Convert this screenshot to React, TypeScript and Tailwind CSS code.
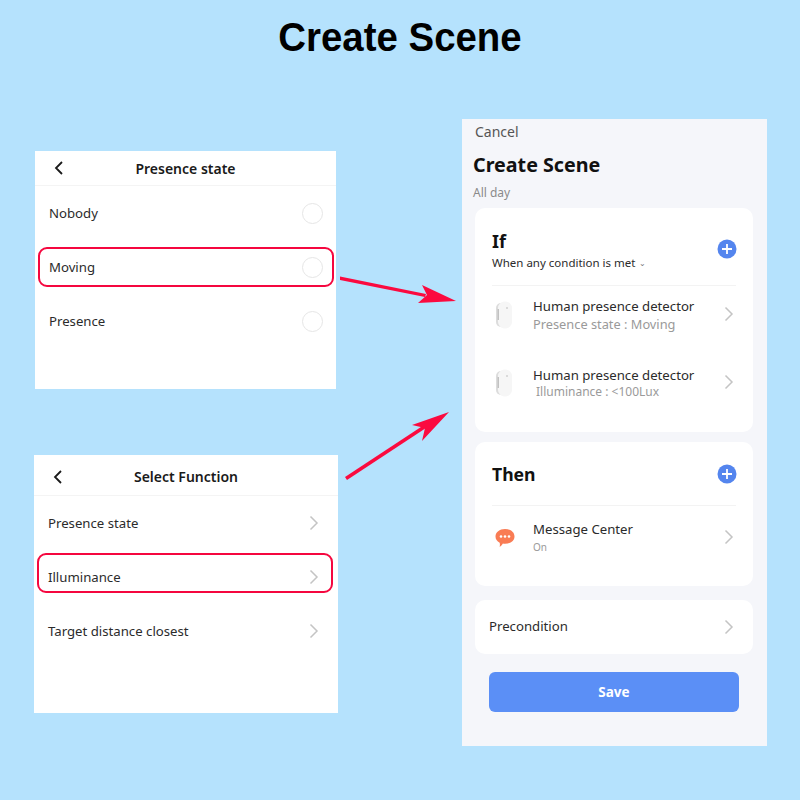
import React from 'react';

const APP_FONT = "font-['Noto_Sans',sans-serif]";

const Chevron: React.FC<{ className?: string }> = ({ className = '' }) => (
  <svg width="10" height="16" viewBox="0 0 10 16" fill="none" className={`shrink-0 ${className}`}>
    <path d="M1.5 1.5 L8 8 L1.5 14.5" stroke="#c4c4c4" strokeWidth="1.5" />
  </svg>
);

const BackArrow: React.FC = () => (
  <svg width="10" height="14" viewBox="0 0 10 14" fill="none" className="shrink-0">
    <path d="M8 1 L2 7 L8 13" stroke="#1a1a1a" strokeWidth="1.8" />
  </svg>
);

const Radio: React.FC = () => (
  <span className="block w-[21px] h-[21px] rounded-full border border-[#e6e6e6] shrink-0" />
);

const PlusButton: React.FC<{ className?: string }> = ({ className = '' }) => (
  <svg width="20" height="20" viewBox="0 0 20 20" className={`shrink-0 ${className}`}>
    <circle cx="10" cy="10" r="9.5" fill="#5485ee" />
    <path d="M10 5 V15 M5 10 H15" stroke="#ffffff" strokeWidth="1.8" />
  </svg>
);

const SensorIcon: React.FC = () => (
  <svg width="18" height="28" viewBox="0 0 18 28" className="shrink-0">
    <rect x="1" y="2" width="10" height="24" rx="5" fill="#dcdcdc" />
    <rect x="3" y="0.5" width="14" height="27" rx="6.5" fill="#f6f6f6" />
    <rect x="2.5" y="8" width="1.5" height="11" fill="#c2c2c2" />
    <circle cx="12" cy="7" r="0.7" fill="#a8a8a8" />
  </svg>
);

const MessageIcon: React.FC = () => (
  <svg width="20" height="20" viewBox="0 0 20 20" className="shrink-0">
    <path
      d="M10 1 C15.5 1 19.5 4.2 19.5 8.5 C19.5 12.8 15.5 15.8 10 15.8 C9.2 15.8 8.6 15.8 7.9 15.6 C7 17 6 18.3 4.6 19 C5 17.6 5 16.2 4.7 14.7 C2 13.4 0.5 11.2 0.5 8.5 C0.5 4.2 4.5 1 10 1 Z"
      fill="#f97c54"
    />
    <circle cx="6" cy="8.5" r="1.3" fill="#fff" />
    <circle cx="10" cy="8.5" r="1.3" fill="#fff" />
    <circle cx="14" cy="8.5" r="1.3" fill="#fff" />
  </svg>
);

const Arrows: React.FC = () => (
  <svg className="absolute inset-0 pointer-events-none" width="800" height="800" viewBox="0 0 800 800">
    <path d="M340 276.5 L426 294 L425 297 L340 280 Z" fill="#fb0a3f" />
    <path d="M456 301 L422 285 L427 295 L418 303 Z" fill="#fb0a3f" />
    <path d="M345 477 L424 425 L426 428 L347 480 Z" fill="#fb0a3f" />
    <path d="M449 412 L412 425 L425 428 L422 441 Z" fill="#fb0a3f" />
  </svg>
);

type RowProps = { label: string; highlight?: string; trailing: React.ReactNode; trailingInset: string };

const ListRow: React.FC<RowProps> = ({ label, highlight, trailing, trailingInset }) => (
  <div className={`relative h-[54px] flex items-center justify-between pl-[14px] ${trailingInset}`}>
    <span className="pt-[1px] text-[13.2px] text-[#2b2b2b]">{label}</span>
    {trailing}
    {highlight && (
      <span className={`absolute left-[3px] w-[296px] h-[40px] rounded-[9px] border-2 border-[#f5073f] ${highlight}`} />
    )}
  </div>
);

const PresencePanel: React.FC = () => (
  <div className="ml-px w-[301px] h-[238px] bg-white">
    <div className="relative h-[35px] flex items-center justify-center border-b border-[#f4f4f4]">
      <span className="absolute left-[19px] top-[10px] flex"><BackArrow /></span>
      <span className="text-[14px] font-semibold text-[#1a1a1a]">Presence state</span>
    </div>
    <ListRow label="Nobody" trailing={<Radio />} trailingInset="pr-[13px]" />
    <ListRow label="Moving" highlight="top-[7px]" trailing={<Radio />} trailingInset="pr-[13px]" />
    <ListRow label="Presence" trailing={<Radio />} trailingInset="pr-[13px]" />
  </div>
);

const FunctionPanel: React.FC = () => (
  <div className="w-[304px] h-[258px] mt-[66px] bg-white">
    <div className="relative h-[41px] pt-[2px] flex items-center justify-center border-b border-[#f4f4f4]">
      <span className="absolute left-[19px] top-[15px] flex"><BackArrow /></span>
      <span className="text-[14px] font-semibold text-[#1a1a1a]">Select Function</span>
    </div>
    <ListRow label="Presence state" trailing={<Chevron />} trailingInset="pr-[19px]" />
    <ListRow label="Illuminance" highlight="top-[3px]" trailing={<Chevron />} trailingInset="pr-[19px]" />
    <ListRow label="Target distance closest" trailing={<Chevron />} trailingInset="pr-[19px]" />
  </div>
);

type DeviceProps = { icon: React.ReactNode; title: string; sub: string; subClass: string; rowClass: string };

const DeviceRow: React.FC<DeviceProps> = ({ icon, title, sub, subClass, rowClass }) => (
  <div className={`flex items-center ${rowClass}`}>
    <div className="w-[41px] pl-[3px] flex">{icon}</div>
    <div className="flex-1 flex flex-col">
      <span className="text-[13.2px] leading-[18px] text-[#2b2b2b]">{title}</span>
      <span className={subClass}>{sub}</span>
    </div>
    <Chevron className="mb-[3px] translate-x-[1px]" />
  </div>
);

const ScenePanel: React.FC = () => (
  <div className="w-[305px] h-[627px] bg-[#f5f6fa] flex flex-col pl-[13px] pr-[14px]">
    <div className="mt-[3px] text-[14px] leading-[20px] text-[#555555]">Cancel</div>
    <div className="mt-[9px] -ml-[2px] text-[19.7px] leading-[28px] font-bold text-[#111111]">Create Scene</div>
    <div className="mt-[6px] -ml-[2px] text-[12px] leading-[16px] text-[#8a8a8a]">All day</div>
    <div className="mt-[7px] h-[224px] bg-white rounded-[10px] pl-[17px] pr-[17px]">
      <div className="h-[78px] pt-[3px] border-b border-[#f3f3f3] flex items-center justify-between">
        <div className="flex flex-col pt-[4px]">
          <span className="text-[18px] leading-[26px] font-bold text-[#111111]">If</span>
          <span className="text-[11.5px] leading-[18px] text-[#2b2b2b]">
            When any condition is met <span className="ml-[1px] text-[8px] text-[#777777] align-middle">⌄</span>
          </span>
        </div>
        <PlusButton className="translate-x-[1px] translate-y-[1px]" />
      </div>
      <DeviceRow
        icon={<SensorIcon />}
        title="Human presence detector"
        sub="Presence state : Moving"
        subClass="text-[12.8px] leading-[18px] text-[#9a9a9a]"
        rowClass="mt-[11px] h-[36px] pr-[3px]"
      />
      <DeviceRow
        icon={<SensorIcon />}
        title="Human presence detector"
        sub="Illuminance : <100Lux"
        subClass="pl-[3px] text-[12px] leading-[16px] text-[#9a9a9a]"
        rowClass="mt-[32px] h-[36px] pr-[3px]"
      />
    </div>
    <div className="mt-[10px] h-[144px] bg-white rounded-[10px] pl-[17px] pr-[17px]">
      <div className="h-[64px] pt-[2px] border-b border-[#f3f3f3] flex items-center justify-between">
        <span className="text-[17.6px] font-bold text-[#111111]">Then</span>
        <PlusButton className="translate-x-[1px] mb-[2px]" />
      </div>
      <DeviceRow
        icon={<MessageIcon />}
        title="Message Center"
        sub="On"
        subClass="text-[10px] leading-[18px] text-[#9a9a9a]"
        rowClass="mt-[14px] h-[36px] pr-[3px]"
      />
    </div>
    <div className="mt-[14px] h-[54px] bg-white rounded-[10px] flex items-center justify-between pl-[14px] pr-[19px]">
      <span className="text-[13.2px] text-[#2b2b2b]">Precondition</span>
      <Chevron />
    </div>
    <div className="mt-[18px] mx-[14px] h-[40px] rounded-[6px] bg-[#5b8ff6] flex items-center justify-center text-[13.5px] font-bold text-white">
      Save
    </div>
  </div>
);

const App: React.FC = () => (
  <div className={`relative w-[800px] h-[800px] bg-[#b5e2fd] overflow-hidden ${APP_FONT}`}>
    <div className="h-[119px] pt-[13px] text-center text-[40px] leading-[48px] font-bold text-black font-['Liberation_Sans',sans-serif] scale-x-[0.96]">
      Create Scene
    </div>
    <div className="flex items-start pl-[34px]">
      <div className="w-[304px] pt-[32px] flex flex-col">
        <PresencePanel />
        <FunctionPanel />
      </div>
      <div className="ml-[124px]">
        <ScenePanel />
      </div>
    </div>
    <Arrows />
  </div>
);

export default App;
